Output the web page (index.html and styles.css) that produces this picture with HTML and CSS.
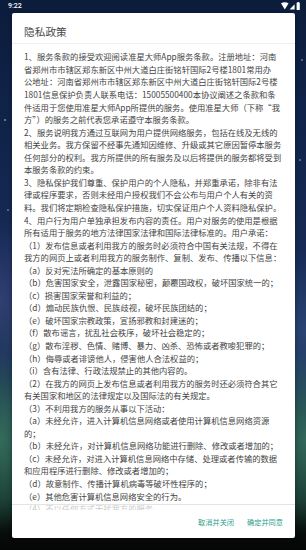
FILE: index.html
```html
<!DOCTYPE html>
<html lang="zh-CN">
<head>
<meta charset="utf-8">
<title>隐私政策</title>
<link rel="stylesheet" href="styles.css">
</head>
<body>
<div class="screen">
  <div class="status">
    <span class="time">9:22</span>
    <svg class="sys-icons" width="20" height="9" viewBox="0 0 20 9">
      <path d="M0 1.2 Q3.8 -0.6 7.6 1.2 L3.8 7.6 Z" fill="#fff"/>
      <path d="M8.6 7.6 L13.6 2.2 L13.6 7.6 Z" fill="#fff"/>
      <rect x="15.6" y="0.6" width="3.2" height="7.4" rx="0.5" fill="#fff"/>
      <rect x="16.4" y="0" width="1.6" height="0.8" fill="#fff"/>
    </svg>
  </div>
  <div class="dialog">
    <h1 class="title">隐私政策</h1>
    <div class="scroll">
      <div class="content">
        <p>1、服务条款的接受欢迎阅读准星大师App服务条款。注册地址：河南<br>省郑州市市辖区郑东新区中州大道白庄街铭轩国际2号楼1801常用办<br>公地址：河南省郑州市市辖区郑东新区中州大道白庄街铭轩国际2号楼<br>1801信息保护负责人联系电话：15005500400本协议阐述之条款和条<br>件适用于您使用准星大师App所提供的服务。使用准星大师（下称“我<br>方”）的服务之前代表您承诺遵守本服务条款。</p>
        <p>2、服务说明我方通过互联网为用户提供网络服务，包括在线及无线的<br>相关业务。我方保留不经事先通知因维修、升级或其它原因暂停本服务<br>任何部分的权利。我方所提供的所有服务及以后将提供的服务都将受到<br>本服务条款的约束。</p>
        <p>3、隐私保护我们尊重、保护用户的个人隐私，并郑重承诺，除非有法<br>律或程序要求，否则未经用户授权我们不会公布与用户个人有关的资<br>料。我们将定期检查隐私保护措施，切实保证用户个人资料隐私保护。</p>
        <p>4、用户行为用户单独承担发布内容的责任。用户对服务的使用是根据<br>所有适用于服务的地方法律国家法律和国际法律标准的。用户承诺：</p>
        <p>（1）发布信息或者利用我方的服务时必须符合中国有关法规，不得在<br>我方的网页上或者利用我方的服务制作、复制、发布、传播以下信息：</p>
        <p>（a）反对宪法所确定的基本原则的</p>
        <p>（b）危害国家安全，泄露国家秘密，颠覆国政权，破坏国家统一的；</p>
        <p>（c）损害国家荣誉和利益的；</p>
        <p>（d）煽动民族仇恨、民族歧视，破坏民族团结的；</p>
        <p>（e）破坏国家宗教政策，宣扬邪教和封建迷的；</p>
        <p>（f）散布谣言，扰乱社会秩序，破坏社会稳定的；</p>
        <p>（g）散布淫秽、色情、赌博、暴力、凶杀、恐怖或者教唆犯罪的；</p>
        <p>（h）侮辱或者诽谤他人，侵害他人合法权益的；</p>
        <p>（i）含有法律、行政法规禁止的其他内容的。</p>
        <p>（2）在我方的网页上发布信息或者利用我方的服务时还必须符合其它<br>有关国家和地区的法律规定以及国际法的有关规定。</p>
        <p>（3）不利用我方的服务从事以下活动：</p>
        <p>（a）未经允许，进入计算机信息网络或者使用计算机信息网络资源<br>的；</p>
        <p>（b）未经允许，对计算机信息网络功能进行删除、修改或者增加的；</p>
        <p>（c）未经允许，对进入计算机信息网络中存储、处理或者传输的数据<br>和应用程序进行删除、修改或者增加的；</p>
        <p>（d）故意制作、传播计算机病毒等破坏性程序的；</p>
        <p>（e）其他危害计算机信息网络安全的行为。</p>
        <p>（4）不以任何方式干扰我方的服务。</p>
      </div>
    </div>
    <div class="actions">
      <span class="btn">取消并关闭</span>
      <span class="btn">确定并同意</span>
    </div>
  </div>
</div>
</body>
</html>
```

FILE: styles.css
```css
* { box-sizing: border-box; }
html, body { margin: 0; padding: 0; }
body {
  width: 306px;
  height: 550px;
  overflow: hidden;
  font-family: "Noto Sans CJK SC", "Noto Sans", sans-serif;
}
.screen {
  width: 306px;
  height: 550px;
  display: flex;
  flex-direction: column;
  background:
    radial-gradient(circle at 5px 120px, rgba(255,255,255,0.5) 0 0.6px, transparent 1px),
    radial-gradient(circle at 8px 210px, rgba(255,255,255,0.4) 0 0.6px, transparent 1px),
    radial-gradient(circle at 300px 160px, rgba(255,255,255,0.4) 0 0.6px, transparent 1px),
    radial-gradient(circle at 302px 60px, rgba(255,255,255,0.4) 0 0.6px, transparent 1px),
    radial-gradient(ellipse 40px 90px at 0 440px, rgba(70,140,110,0.55), transparent),
    radial-gradient(ellipse 40px 90px at 306px 440px, rgba(70,140,110,0.5), transparent),
    radial-gradient(ellipse 50px 80px at 0 300px, rgba(70,80,140,0.5), transparent),
    radial-gradient(ellipse 50px 80px at 306px 330px, rgba(60,90,150,0.45), transparent),
    linear-gradient(to bottom, #0c1c3b 0px, #10244a 120px, #162a55 260px, #1b3456 360px, #1d4443 440px, #14302a 500px, #070b09 535px, #050706 550px);
}
.status {
  height: 13px;
  display: flex;
  align-items: center;
  justify-content: space-between;
  padding: 0 5px 0 8px;
}
.time {
  color: #fff;
  font-family: Roboto, "Noto Sans", sans-serif;
  font-size: 7px;
  font-weight: 500;
  line-height: 13px;
}
.sys-icons { display: block; margin-top: 0; }
.dialog {
  margin-left: 12px;
  width: 283px;
  height: 525px;
  background: #fff;
  border-radius: 2px;
  box-shadow: 0 1px 4px rgba(0,0,0,0.35);
  display: flex;
  flex-direction: column;
  overflow: hidden;
}
.title {
  margin: 0;
  padding: 12px 12px 0;
  height: 30px;
  font-size: 10.7px;
  line-height: 14px;
  font-weight: 400;
  color: #4a4a4a;
}
.scroll {
  position: relative;
  flex: 1;
  overflow: hidden;
  border-top: 1px solid #efefef;
  padding: 6.4px 0 0 12px;
}
.scroll::after {
  content: "";
  position: absolute;
  left: 0;
  right: 0;
  bottom: 0;
  height: 5px;
  border-top: 1px solid #e4e4e4;
  background: rgba(255,255,255,0.7);
}
.content {
  width: 270px;
  font-size: 8.3px;
  line-height: 12.55px;
  color: #444;
  white-space: nowrap;
}
.content p { margin: 0; }
.actions {
  height: 28px;
  display: flex;
  justify-content: flex-end;
  align-items: center;
  gap: 13px;
  padding: 0 12px 4px 0;
}
.btn {
  font-size: 7.2px;
  line-height: 10px;
  color: #2ba08b;
}
```
